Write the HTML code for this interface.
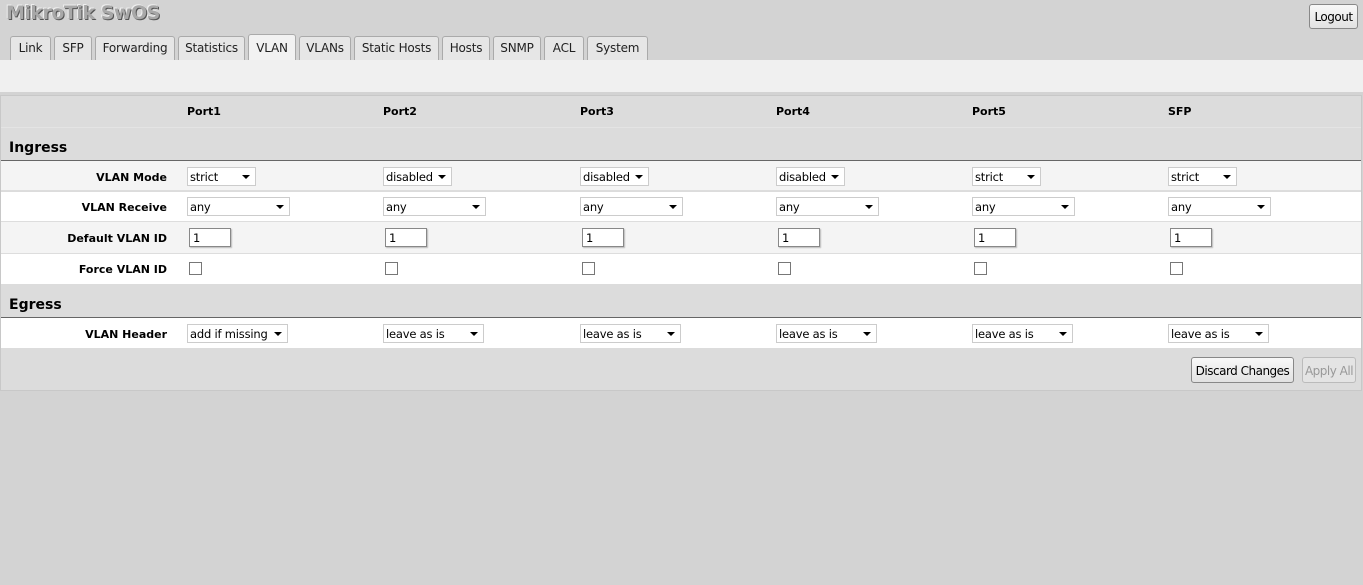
<!DOCTYPE html>
<html><head><meta charset="utf-8"><style>
*{margin:0;padding:0;box-sizing:border-box}
body{width:1363px;height:585px;background:#d3d3d3;font-family:Tahoma,"DejaVu Sans","Liberation Sans",sans-serif;font-size:12px;color:#000;position:relative;overflow:hidden}
.a{position:absolute}
.title{left:6px;top:2px;font:bold 19px "DejaVu Sans",sans-serif;color:#a8a8a8;text-shadow:1px 1px 0 #555,-1px -1px 0 #eee;letter-spacing:-0.5px}
.tab{position:absolute;top:36px;height:24px;background:#e6e6e6;border:1px solid #aaa;border-bottom:none;border-radius:3px 3px 0 0;text-align:center;line-height:22px;font-size:12px;color:#222;letter-spacing:-0.2px}
.tab.on{top:34px;height:26px;background:#f2f2f2;line-height:26px}
.btn{position:absolute;border:1px solid #888;border-radius:3px;background:linear-gradient(#f8f8f8,#e2e2e2);text-align:center;font-size:12px;letter-spacing:-0.5px}
.row{position:absolute;left:1px;width:1360px}
.lbl{position:absolute;right:1196px;font-weight:bold;font-size:11px}
.ph{position:absolute;top:105px;font-weight:bold;font-size:11px}
.sel{position:absolute;height:19px;border:1px solid #ccc;background:#fff;font-size:11.5px;line-height:18px;padding-left:2px;letter-spacing:-0.2px}
.sel:after{content:"";position:absolute;right:5px;top:7px;border-left:4px solid transparent;border-right:4px solid transparent;border-top:4px solid #000}
.inp{position:absolute;width:42px;height:19px;border:1px solid #888;box-shadow:1px 1px 1px #bbb;background:#fff;line-height:18px;padding-left:3px;font-size:11.5px}
.cb{position:absolute;width:13px;height:13px;border:1px solid #777;background:#fff}
.h{position:absolute;left:9px;font-weight:bold;font-size:14px}
</style></head><body>
<div class="a title">MikroTik SwOS</div>
<div class="btn" style="left:1309px;top:4px;width:49px;height:25px;line-height:25px">Logout</div>
<div class="tab" style="left:10px;width:41px">Link</div>
<div class="tab" style="left:54px;width:38px">SFP</div>
<div class="tab" style="left:95px;width:80px">Forwarding</div>
<div class="tab" style="left:178px;width:67px">Statistics</div>
<div class="tab on" style="left:248px;width:48px">VLAN</div>
<div class="tab" style="left:299px;width:52px">VLANs</div>
<div class="tab" style="left:354px;width:85px">Static Hosts</div>
<div class="tab" style="left:442px;width:48px">Hosts</div>
<div class="tab" style="left:493px;width:48px">SNMP</div>
<div class="tab" style="left:544px;width:40px">ACL</div>
<div class="tab" style="left:587px;width:61px">System</div>
<div class="a" style="left:0;top:60px;width:1363px;height:32px;background:#f0f0f0"></div>
<div class="a" style="left:0;top:95px;width:1362px;height:296px;background:#dcdcdc;border:1px solid #c8c8c8"></div>
<div class="a" style="left:1px;top:127px;width:1360px;height:1px;background:#e4e4e4"></div>
<div class="ph" style="left:187px">Port1</div><div class="ph" style="left:383px">Port2</div><div class="ph" style="left:580px">Port3</div><div class="ph" style="left:776px">Port4</div><div class="ph" style="left:972px">Port5</div><div class="ph" style="left:1168px">SFP</div>
<div class="h" style="top:140px">Ingress</div>
<div class="row" style="top:160px;height:1px;background:#666"></div>
<div class="row" style="top:161px;height:30px;background:#f4f4f4;border-bottom:1px solid #ddd"></div>
<div class="row" style="top:192px;height:30px;background:#fff;border-bottom:1px solid #ddd"></div>
<div class="row" style="top:222px;height:32px;background:#f4f4f4;border-bottom:1px solid #ddd"></div>
<div class="row" style="top:254px;height:30px;background:#fff"></div>
<div class="h" style="top:297px">Egress</div>
<div class="row" style="top:317px;height:1px;background:#666"></div>
<div class="row" style="top:318px;height:30px;background:#fff"></div>
<div class="lbl" style="top:171px">VLAN Mode</div>
<div class="lbl" style="top:201px">VLAN Receive</div>
<div class="lbl" style="top:232px">Default VLAN ID</div>
<div class="lbl" style="top:263px">Force VLAN ID</div>
<div class="lbl" style="top:328px">VLAN Header</div>

<div class="sel" style="left:187px;top:167px;width:69px">strict</div>
<div class="sel" style="left:383px;top:167px;width:69px">disabled</div>
<div class="sel" style="left:580px;top:167px;width:69px">disabled</div>
<div class="sel" style="left:776px;top:167px;width:69px">disabled</div>
<div class="sel" style="left:972px;top:167px;width:69px">strict</div>
<div class="sel" style="left:1168px;top:167px;width:69px">strict</div>

<div class="sel" style="left:187px;top:197px;width:103px">any</div>
<div class="sel" style="left:383px;top:197px;width:103px">any</div>
<div class="sel" style="left:580px;top:197px;width:103px">any</div>
<div class="sel" style="left:776px;top:197px;width:103px">any</div>
<div class="sel" style="left:972px;top:197px;width:103px">any</div>
<div class="sel" style="left:1168px;top:197px;width:103px">any</div>

<div class="inp" style="left:189px;top:228px">1</div>
<div class="inp" style="left:385px;top:228px">1</div>
<div class="inp" style="left:582px;top:228px">1</div>
<div class="inp" style="left:778px;top:228px">1</div>
<div class="inp" style="left:974px;top:228px">1</div>
<div class="inp" style="left:1170px;top:228px">1</div>

<div class="cb" style="left:189px;top:262px"></div>
<div class="cb" style="left:385px;top:262px"></div>
<div class="cb" style="left:582px;top:262px"></div>
<div class="cb" style="left:778px;top:262px"></div>
<div class="cb" style="left:974px;top:262px"></div>
<div class="cb" style="left:1170px;top:262px"></div>

<div class="sel" style="left:187px;top:324px;width:101px">add if missing</div>
<div class="sel" style="left:383px;top:324px;width:101px">leave as is</div>
<div class="sel" style="left:580px;top:324px;width:101px">leave as is</div>
<div class="sel" style="left:776px;top:324px;width:101px">leave as is</div>
<div class="sel" style="left:972px;top:324px;width:101px">leave as is</div>
<div class="sel" style="left:1168px;top:324px;width:101px">leave as is</div>

<div class="btn" style="left:1191px;top:357px;width:103px;height:26px;line-height:26px">Discard Changes</div>
<div class="btn" style="left:1302px;top:357px;width:54px;height:26px;line-height:26px;color:#999;border-color:#bbb;background:#e4e4e4">Apply All</div>
</body></html>
